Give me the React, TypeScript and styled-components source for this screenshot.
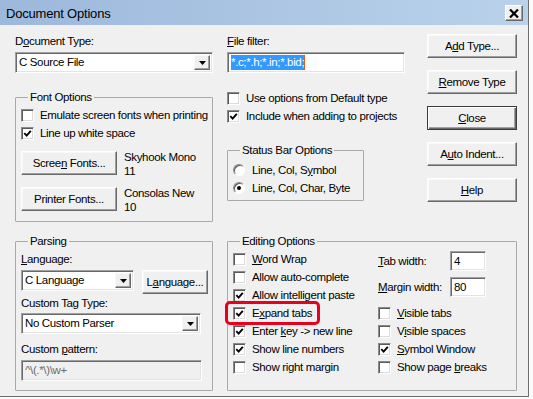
import React from "react";
import styled, { createGlobalStyle } from "styled-components";

const GlobalStyle = createGlobalStyle`
    html, body {
        margin: 0;
        padding: 0;
        background: #fbfbfb;
    }
    body {
        font-family: "Liberation Sans", Arial, sans-serif;
        font-size: 11.5px;
        color: #000;
    }
    * {
        box-sizing: border-box;
    }
`;

const Window = styled.div`
    width: 529px;
    height: 397px;
    background: #f0f0f0;
    border-right: 1px solid #6e6e6e;
    border-bottom: 1px solid #6e6e6e;
    display: flex;
    flex-direction: column;
    letter-spacing: -0.35px;
`;

const TitleBar = styled.div`
    height: 25px;
    flex: none;
    display: flex;
    align-items: center;
    justify-content: space-between;
    padding: 1px 5px 0 6px;
    background: linear-gradient(to right, #9cb8db, #bad2eb);
    font-size: 13px;
    letter-spacing: -0.2px;
`;

const CloseBox = styled.div`
    width: 18px;
    height: 16px;
    display: flex;
    align-items: center;
    justify-content: center;
    background: #f0f0f0;
    border: 1px solid;
    border-color: #fff #696969 #696969 #fff;
    box-shadow: inset -1px -1px #a0a0a0;
`;

const Body = styled.div`
    flex: 1;
    padding: 9px 11px 0 15px;
    display: flex;
    flex-direction: column;
`;

const TopGrid = styled.div`
    display: grid;
    grid-template-columns: 198px 178px 1fr;
    column-gap: 14px;
    align-items: start;
`;

const Column = styled.div`
    display: flex;
    flex-direction: column;
    align-items: flex-start;
`;

const ButtonColumn = styled.div`
    display: flex;
    flex-direction: column;
    gap: 12px;
    padding-left: 8px;
`;

const BottomGrid = styled.div`
    display: grid;
    grid-template-columns: 198px 1fr;
    column-gap: 14px;
    margin-top: 12px;
    height: 157px;
`;

const Label = styled.div<{ $gap?: number }>`
    line-height: 14px;
    height: 14px;
    white-space: nowrap;
    margin-top: ${(p) => p.$gap ?? 0}px;
`;

const U = styled.span`
    text-decoration: underline;
    text-underline-offset: 1px;
`;

const Group = styled.fieldset<{ $gap?: number; $width?: number; $pad?: string }>`
    margin: ${(p) => p.$gap ?? 0}px 0 0 0;
    min-width: 0;
    width: ${(p) => (p.$width ? `${p.$width}px` : "auto")};
    border: 1px solid #a9a9a9;
    border-radius: 1px;
    padding: ${(p) => p.$pad ?? "2px 5px 7px 5px"};
`;

const Legend = styled.legend`
    margin-left: 7px;
    padding: 0 2px;
    line-height: 14px;
    font-size: 11.5px;
`;

const Button = styled.div<{ $width?: number; $default?: boolean }>`
    width: ${(p) => p.$width ?? 90}px;
    height: 24px;
    flex: none;
    display: flex;
    align-items: center;
    justify-content: center;
    background: #f0f0f0;
    white-space: nowrap;
    border: 1px solid;
    border-color: ${(p) => (p.$default ? "#3c3c3c" : "#fff #696969 #696969 #fff")};
    box-shadow: ${(p) =>
        p.$default
            ? "inset 1px 1px #fff, inset -1px -1px #696969, inset -2px -2px #a0a0a0"
            : "inset -1px -1px #a0a0a0, inset 1px 1px #f8f8f8"};
`;

const Sunken = styled.div<{ $width: number; $disabled?: boolean; $height?: number }>`
    width: ${(p) => p.$width}px;
    height: ${(p) => p.$height ?? 21}px;
    flex: none;
    display: flex;
    align-items: stretch;
    background: ${(p) => (p.$disabled ? "#f0f0f0" : "#fff")};
    color: ${(p) => (p.$disabled ? "#6d6d6d" : "#000")};
    border: 1px solid;
    border-color: #a0a0a0 #fff #fff #a0a0a0;
    box-shadow: inset 1px 1px #696969, inset -1px -1px #e3e3e3;
    padding: 2px;
    line-height: 15px;
    white-space: nowrap;
`;

const FieldText = styled.div`
    flex: 1;
    padding-left: 1px;
    overflow: hidden;
`;

const Selection = styled.span`
    background: #3399ff;
    color: #fff;
    display: inline-block;
    height: 15px;
    border-right: 1px solid #e2571e;
`;

const ArrowButton = styled.div`
    width: 16px;
    flex: none;
    display: flex;
    align-items: center;
    justify-content: center;
    background: #f0f0f0;
    border: 1px solid;
    border-color: #f8f8f8 #696969 #696969 #f8f8f8;
    box-shadow: inset -1px -1px #a0a0a0;
`;

const CheckRow = styled.div`
    position: relative;
    display: flex;
    align-items: center;
    height: 18px;
    white-space: nowrap;
`;

const Box = styled.span`
    width: 13px;
    height: 13px;
    flex: none;
    margin-right: 6px;
    display: flex;
    align-items: center;
    justify-content: center;
    background: #fff;
    border: 1px solid;
    border-color: #8a8a8a #fff #fff #8a8a8a;
    box-shadow: inset 1px 1px #5a5a5a, inset -1px -1px #dcdcdc;
`;

const Round = styled.span<{ $on?: boolean }>`
    width: 12px;
    height: 12px;
    flex: none;
    margin-right: 7px;
    border-radius: 50%;
    background: #fff;
    border: 1px solid;
    border-color: #8a8a8a #fff #fff #8a8a8a;
    box-shadow: inset 1px 1px #5a5a5a;
    display: flex;
    align-items: center;
    justify-content: center;

    &::after {
        content: "";
        width: 4px;
        height: 4px;
        border-radius: 50%;
        background: ${(p) => (p.$on ? "#000" : "transparent")};
    }
`;

const Highlight = styled.span`
    position: absolute;
    left: -8px;
    top: -3px;
    width: 95px;
    height: 24px;
    border: 3px solid #e8001c;
    border-radius: 5px;
    pointer-events: none;
`;

const FontRow = styled.div<{ $gap: number }>`
    display: flex;
    align-items: flex-start;
    gap: 7px;
    margin-top: ${(p) => p.$gap}px;
`;

const FontName = styled.div`
    line-height: 14px;
    margin-top: -1px;
`;

const LangRow = styled.div`
    display: flex;
    align-items: flex-start;
    gap: 8px;
    margin-top: 4px;
`;

const EditGrid = styled.div`
    display: grid;
    grid-template-columns: 145px 1fr;
`;

const NumberBlock = styled.div`
    height: 54px;
    display: flex;
    flex-direction: column;
    gap: 6px;
    padding-top: 1px;
`;

const NumberRow = styled.div`
    display: flex;
    align-items: center;
    justify-content: space-between;
    width: 108px;
`;

const ArrowGlyph = () => (
    <svg width="7" height="4" viewBox="0 0 7 4">
        <path d="M0 0h7L3.5 4z" fill="#000" />
    </svg>
);

const CheckMark = () => (
    <svg width="9" height="9" viewBox="0 0 9 9">
        <path d="M1.3 4.2 L3.6 6.6 L7.8 1.8" fill="none" stroke="#000" strokeWidth="1.9" />
    </svg>
);

const Check = ({ on, children, mark }: { on?: boolean; children: React.ReactNode; mark?: boolean }) => (
    <CheckRow>
        {mark && <Highlight />}
        <Box>{on && <CheckMark />}</Box>
        <span>{children}</span>
    </CheckRow>
);

const Radio = ({ on, children }: { on?: boolean; children: React.ReactNode }) => (
    <CheckRow>
        <Round $on={on} />
        <span>{children}</span>
    </CheckRow>
);

const Combo = ({ width, text }: { width: number; text: string }) => (
    <Sunken $width={width}>
        <FieldText>{text}</FieldText>
        <ArrowButton>
            <ArrowGlyph />
        </ArrowButton>
    </Sunken>
);

const App: React.FC = () => {
    return (
        <>
            <GlobalStyle />
            <Window>
                <TitleBar>
                    <span>Document Options</span>
                    <CloseBox>
                        <svg width="10" height="9" viewBox="0 0 10 9">
                            <path d="M1 0.5 L9 8.5 M9 0.5 L1 8.5" stroke="#000" strokeWidth="2.2" />
                        </svg>
                    </CloseBox>
                </TitleBar>

                <Body>
                    <TopGrid>
                        <Column>
                            <Label>
                                D<U>o</U>cument Type:
                            </Label>
                            <div style={{ marginTop: 4 }}>
                                <Combo width={198} text="C Source File" />
                            </div>
                            <Group $gap={17} $width={198}>
                                <Legend>Font Options</Legend>
                                <Check>Emulate screen fonts when printing</Check>
                                <Check on>Line up white space</Check>
                                <FontRow $gap={9}>
                                    <Button $width={96}>
                                        Scree<U>n</U>&nbsp;Fonts...
                                    </Button>
                                    <FontName>
                                        Skyhook Mono
                                        <br />
                                        11
                                    </FontName>
                                </FontRow>
                                <FontRow $gap={9}>
                                    <Button $width={96}>Printer Fonts...</Button>
                                    <FontName>
                                        Consolas New
                                        <br />
                                        10
                                    </FontName>
                                </FontRow>
                            </Group>
                        </Column>

                        <Column>
                            <Label>
                                <U>F</U>ile filter:
                            </Label>
                            <div style={{ marginTop: 4 }}>
                                <Sunken $width={178} $height={21}>
                                    <FieldText>
                                        <Selection>*.c;*.h;*.in;*.bid;</Selection>
                                    </FieldText>
                                </Sunken>
                            </div>
                            <div style={{ marginTop: 16 }}>
                                <Check>Use options from Default type</Check>
                                <Check on>Include when adding to projects</Check>
                            </div>
                            <Group $gap={18} $width={137} $pad="4px 5px 3px 5px">
                                <Legend>Status Bar Options</Legend>
                                <Radio>
                                    Line, Col, S<U>y</U>mbol
                                </Radio>
                                <Radio on>Line, Col, Char, Byte</Radio>
                            </Group>
                        </Column>

                        <ButtonColumn>
                            <Button>
                                A<U>d</U>d Type...
                            </Button>
                            <Button>
                                <U>R</U>emove Type
                            </Button>
                            <Button $default>
                                <U>C</U>lose
                            </Button>
                            <Button>
                                A<U>u</U>to Indent...
                            </Button>
                            <Button>
                                <U>H</U>elp
                            </Button>
                        </ButtonColumn>
                    </TopGrid>

                    <BottomGrid>
                        <Group $pad="4px 5px 8px 5px">
                            <Legend>Parsing</Legend>
                            <Label>
                                <U>L</U>anguage:
                            </Label>
                            <LangRow>
                                <Combo width={113} text="C Language" />
                                <Button $width={66}>
                                    L<U>a</U>nguage...
                                </Button>
                            </LangRow>
                            <Label $gap={2}>Custom Tag Type:</Label>
                            <div style={{ marginTop: 3 }}>
                                <Combo width={180} text="No Custom Parser" />
                            </div>
                            <Label $gap={8}>
                                Custom <U>p</U>attern:
                            </Label>
                            <div style={{ marginTop: 4 }}>
                                <Sunken $width={181} $disabled>
                                    <FieldText>^\(.*\)\w+</FieldText>
                                </Sunken>
                            </div>
                        </Group>

                        <Group $pad="2px 5px 12px 5px">
                            <Legend>Editing Options</Legend>
                            <EditGrid>
                                <div>
                                    <Check>
                                        <U>W</U>ord Wrap
                                    </Check>
                                    <Check>Allow auto-complete</Check>
                                    <Check on>Allow intelligent paste</Check>
                                    <Check on mark>
                                        E<U>x</U>pand tabs
                                    </Check>
                                    <Check on>
                                        Enter <U>k</U>ey -&gt; new line
                                    </Check>
                                    <Check on>Show line numbers</Check>
                                    <Check>Show right margin</Check>
                                </div>
                                <div>
                                    <NumberBlock>
                                        <NumberRow>
                                            <span>
                                                <U>T</U>ab width:
                                            </span>
                                            <Sunken $width={36} $height={20}>
                                                <FieldText>4</FieldText>
                                            </Sunken>
                                        </NumberRow>
                                        <NumberRow>
                                            <span>
                                                <U>M</U>argin width:
                                            </span>
                                            <Sunken $width={36} $height={20}>
                                                <FieldText>80</FieldText>
                                            </Sunken>
                                        </NumberRow>
                                    </NumberBlock>
                                    <Check>
                                        <U>V</U>isible tabs
                                    </Check>
                                    <Check>
                                        V<U>i</U>sible spaces
                                    </Check>
                                    <Check on>
                                        <U>S</U>ymbol Window
                                    </Check>
                                    <Check>
                                        Show page <U>b</U>reaks
                                    </Check>
                                </div>
                            </EditGrid>
                        </Group>
                    </BottomGrid>
                </Body>
            </Window>
        </>
    );
};

export default App;
